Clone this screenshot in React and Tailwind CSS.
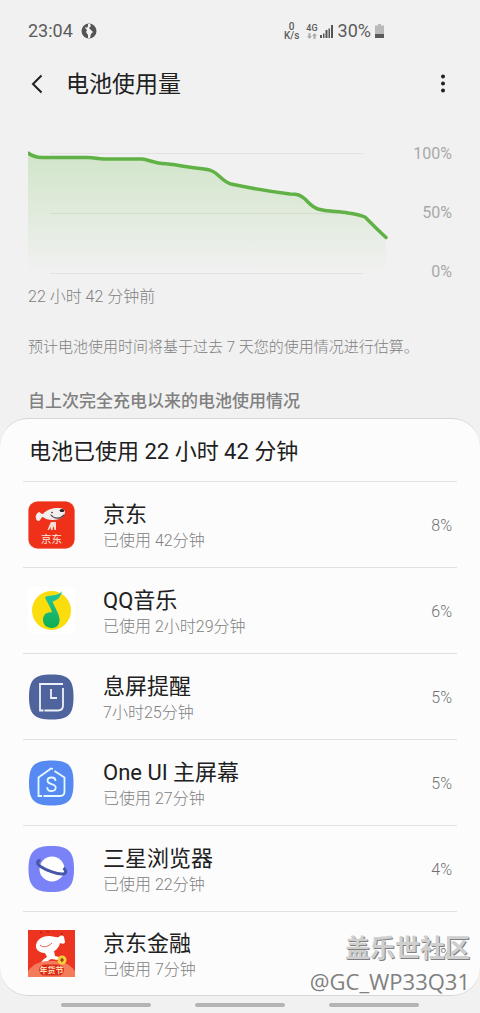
import { useId } from 'react'

function JdIcon() {
  return (
    <svg viewBox="0 0 48 48" className="size-12 shrink-0" aria-hidden="true">
      <rect width="47" height="48" rx="9.500" fill="#f6cfc4" />
      <rect x="0.5" y="0.5" width="46" height="47" rx="9" fill="#ee3118" />
      <path d="M8 17c-1-2 1-5 3-6 1 0 2 2 4 2 3-4 9-6 15-6 4 0 7 1 7 4 0 5-6 8-12 8-5 0-8-1-10-3-2 0-2 3-4 4-2 0-3-1-3-3z" fill="#f4efef" />
      <path d="M23 14c3 4 9 4.500 13 0" fill="none" stroke="#56494a" strokeWidth="1.200" strokeLinecap="round" />
      <ellipse cx="34" cy="9.500" rx="2.500" ry="1.500" fill="#2c2223" />
      <circle cx="24" cy="11.500" r="0.8" fill="#2c2223" />
      <path d="M23 21h5v8h-1.500l-1-4-1 4H23l-.5-3-1.500 3h-1.500l2-5z" fill="#f9dcd5" />
      <text x="23.500" y="41.500" textAnchor="middle" fontSize="10.500" fill="#ffe9e2">京东</text>
    </svg>
  )
}

function MusicIcon() {
  const id = useId()
  return (
    <svg viewBox="0 0 48 48" className="size-12 shrink-0" aria-hidden="true">
      <defs>
        <linearGradient id={id} x1="0" y1="0" x2="0" y2="1">
          <stop offset="0" stopColor="#22c6a5" />
          <stop offset="1" stopColor="#0fae4f" />
        </linearGradient>
      </defs>
      <rect width="47" height="47" rx="6" fill="#fff" />
      <circle cx="23.500" cy="23.500" r="19.500" fill="#fbdc0c" />
      <path
        d="M34 4c-2 3-6 4-10 4.500-3 .3-6 .5-7 1.500 1 4 5 8 7 15.500-6-1-9 3-9 7.500 0 5 4 8 9 8 5 0 8-4 7.500-9C31 26 26 19 24.500 14.500 29 13.500 33 10 34 4z"
        fill={`url(#${id})`}
      />
    </svg>
  )
}

function AodIcon() {
  return (
    <svg viewBox="0 0 48 48" className="size-12 shrink-0" aria-hidden="true">
      <path d="M23.500 1.500c17 0 22 5 22 22.500s-5 22.500-22 22.500S1 41.500 1 24 6.500 1.500 23.500 1.500z" fill="#4f639d" />
      <path d="M35 11H12v26.500h3.500M16.500 37.500H30c3.500 0 5-1.500 5-5V15M23 16v9h6" fill="none" stroke="#eef1f8" strokeWidth="1.800" />
    </svg>
  )
}

function HomeIcon() {
  return (
    <svg viewBox="0 0 48 48" className="size-12 shrink-0" aria-hidden="true">
      <path d="M23.500 1.500c17 0 22 5 22 22.500s-5 22.500-22 22.500S1 41.500 1 24 6.500 1.500 23.500 1.500z" fill="#568af2" />
      <path d="M25 10l-2-.5L10.500 18.500V37H14M15.500 37H32c3 0 4.500-1.500 4.500-4.500V18.500L26.500 12" fill="none" stroke="#e6fbff" strokeWidth="1.800" />
      <path
        d="M27.500 22c0-2.500-1.500-3.500-4-3.500s-4 1.300-4 3.300c0 4.500 8.200 2 8.200 6.700 0 2.300-1.700 3.500-4.200 3.500s-4.300-1.200-4.300-3.800"
        fill="none"
        stroke="#e6fbff"
        strokeWidth="1.800"
      />
    </svg>
  )
}

function BrowserIcon() {
  return (
    <svg viewBox="0 0 48 48" className="size-12 shrink-0" aria-hidden="true">
      <path d="M23.500 1c17 0 22.500 5.500 22.500 23S40.500 47 23.500 47 .5 41.500.5 24 6.500 1 23.500 1z" fill="#7a82f8" />
      <circle cx="24" cy="24" r="12.500" fill="#fff" />
      <path d="M12.500 15.500c-4 0-4 3.500 0 6 6 4 17 8 22.500 7.500 4-.5 3-4 .5-6" fill="none" stroke="#4858a8" strokeWidth="3" />
    </svg>
  )
}

function JdFinanceIcon() {
  return (
    <svg viewBox="0 0 48 48" className="size-12 shrink-0" aria-hidden="true">
      <rect width="47" height="47" fill="#ed3420" />
      <path d="M0 47V41c6-8 14-10 23.500-10S41 33 47 41v6z" fill="#f47c5b" />
      <path d="M12 2l2 1M19 1.500l2 1M34 3l-1 2" stroke="#8f2018" strokeWidth="1" />
      <path d="M8 15C9 9 15 6 21 6c5 0 7 2 10 1 1-2 4-2 5 0l1 5c0 2-3 2-5 1-1 5-5 9-11 10-7 1-14-2-13-8z" fill="#fff" />
      <path d="M12 15c3 3 8 2 12-2" fill="none" stroke="#e46352" strokeWidth="1" />
      <path d="M17 23l9-2 1 5 4 1-1 3-7-1-3 2-7 1 3-3 3-2z" fill="#fff" />
      <circle cx="34" cy="30" r="4.500" fill="#f9cf3c" />
      <path d="M34 27.500l2 2.500-2 2.500-2-2.500z" fill="#955016" />
      <rect x="11" y="34.500" width="25" height="11" rx="5.500" fill="#d92a1b" />
      <text x="23.500" y="43" textAnchor="middle" fontSize="8" fontWeight="bold" fill="#ffd9b0">年货节</text>
    </svg>
  )
}

const apps = [
  { name: '京东', used: '已使用 42分钟', percent: '8%', Icon: JdIcon },
  { name: 'QQ音乐', used: '已使用 2小时29分钟', percent: '6%', Icon: MusicIcon },
  { name: '息屏提醒', used: '7小时25分钟', percent: '5%', Icon: AodIcon },
  { name: 'One UI 主屏幕', used: '已使用 27分钟', percent: '5%', Icon: HomeIcon },
  { name: '三星浏览器', used: '已使用 22分钟', percent: '4%', Icon: BrowserIcon },
  { name: '京东金融', used: '已使用 7分钟', percent: '3%', Icon: JdFinanceIcon },
]

const line =
  'M0 9C4 12 8 13.500 14 13.500H60C67 13.500 69 15 76 15H114C122 16 126 19 134 19.500C146 20 152 22 164 23.500C172 25 178 24.500 184 27C191 30 195 38 203 40C222 44 246 48 262 50C270 50 272 51 277 55C282 60 284 63 290 65C300 68 310 67 320 69C327 70 332 71 337 73L348 84L358 93.500'

function StatusBar() {
  return (
    <div className="flex h-[62px] items-center justify-between pl-7 pr-24 text-[#5c5c5c]">
      <div className="flex items-center gap-2">
        <span className="text-lg">23:04</span>
        <svg viewBox="0 0 16 16" className="size-4" aria-hidden="true">
          <circle cx="8" cy="8" r="7.500" fill="#555" />
          <path d="M7 1l2 0 1 2-2 2 2 2 2 2-2 2-1 4-2 0 0-3-2-3 1-2-2-2 1-1 1 1 1-2z" fill="#f1f1f1" />
        </svg>
      </div>
      <div className="flex items-center">
        <div className="flex flex-col items-center text-[10px] font-medium leading-[9px]">
          <span>0</span>
          <span>K/s</span>
        </div>
        <div className="ml-[7px] flex flex-col items-center gap-px text-[9px] font-medium leading-[8px]">
          <span>4G</span>
          <svg viewBox="0 0 10 6" className="h-1.5 w-2.5" aria-hidden="true">
            <path d="M2.500 6L0 3h1.500V0h2v3H5zM7.500 0L10 3H8.500v3h-2V3H5z" fill="#aaa" />
          </svg>
        </div>
        <svg viewBox="0 0 13 13" className="ml-0.5 size-[13px]" aria-hidden="true">
          <path d="M0 10h2v3H0zM3 8.500h1.500V13H3zM5.500 5h2v8h-2zM8.500 3.500H10V13H8.500zM11 0h2v13h-2z" fill="#555" />
        </svg>
        <span className="ml-[5px] text-lg">30%</span>
        <svg viewBox="0 0 9 14" className="ml-1 h-3.5 w-[9px]" aria-hidden="true">
          <path d="M3 0h3v1.500h3V14H0V1.500h3z" fill="#bababa" />
          <path d="M0 10h9v4H0z" fill="#5a5a5a" />
        </svg>
      </div>
    </div>
  )
}

function Chart() {
  const id = useId()
  return (
    <div className="flex h-[136px] justify-between px-7">
      <svg viewBox="0 0 360 136" preserveAspectRatio="none" className="h-full min-w-0 flex-1" role="img" aria-label="电池使用量">
        <defs>
          <linearGradient id={id} gradientUnits="userSpaceOnUse" x1="0" y1="9" x2="0" y2="130">
            <stop offset="0" stopColor="#70c050" stopOpacity="0.250" />
            <stop offset="1" stopColor="#70c050" stopOpacity="0" />
          </linearGradient>
        </defs>
        <path d="M22 9.500H335M22 69.500H335M22 129.500H335" stroke="#e2e2e2" />
        <path d={`${line}V130H0Z`} fill={`url(#${id})`} />
        <path d={line} fill="none" stroke="#61b246" strokeWidth="3.500" strokeLinecap="round" vectorEffect="non-scaling-stroke" />
      </svg>
      <div className="flex w-16 flex-col justify-between pt-0.5 text-right text-base leading-4 text-[#a8a8a8]">
        <span>100%</span>
        <span>50%</span>
        <span>0%</span>
      </div>
    </div>
  )
}

export default function App() {
  return (
    <div className="relative min-h-screen bg-[#f1f1f1] font-['Roboto','Noto_Sans_CJK_SC',sans-serif]">
      <StatusBar />
      <header className="flex h-11 items-center justify-between px-[27px] text-[#202020]">
        <div className="flex items-center gap-5">
          <button type="button" aria-label="返回" className="flex w-[19px] justify-center">
            <svg viewBox="0 0 12 20" className="h-5 w-3" aria-hidden="true">
              <path d="M10.500 1.500L2 10l8.500 8.500" fill="none" stroke="currentColor" strokeWidth="2" />
            </svg>
          </button>
          <h1 className="pt-0.5 text-[23px] leading-8">电池使用量</h1>
        </div>
        <button type="button" aria-label="更多选项" className="flex w-5 justify-center">
          <svg viewBox="0 0 4 20" className="h-5 w-1" aria-hidden="true">
            <g fill="currentColor">
              <circle cx="2" cy="2.500" r="2" />
              <circle cx="2" cy="9.500" r="2" />
              <circle cx="2" cy="16.500" r="2" />
            </g>
          </svg>
        </button>
      </header>

      <section className="pt-[38px]">
        <Chart />
        <p className="mt-[5px] px-7 text-base font-light leading-6 text-[#808080]">22 小时 42 分钟前</p>
        <p className="mt-[26px] px-7 text-[15px] font-light leading-6 text-[#808080]">预计电池使用时间将基于过去 7 天您的使用情况进行估算。</p>
      </section>

      <h2 className="px-7 pb-[5px] pt-[30px] text-[17px] font-medium leading-6 text-[#808080]">自上次完全充电以来的电池使用情况</h2>

      <main className="rounded-[28px] border-y border-[#d6d6d6] bg-[#fcfcfc] px-[23px]">
        <h3 className="flex h-[62px] items-center px-[6px] pt-[3px] text-[22px] text-[#202020]">电池已使用 22 小时 42 分钟</h3>
        <ul>
          {apps.map(({ name, used, percent, Icon }) => (
            <li key={name} className="flex h-[86px] items-center gap-[27px] border-t border-[#e0e0e0] px-[5px] last:h-[84px]">
              <Icon />
              <div className="min-w-0 flex-1 pt-1">
                <div className="text-[22px] leading-7 text-[#202020]">{name}</div>
                <div className="text-base font-light leading-6 text-[#808080]">{used}</div>
              </div>
              <span className="pt-0.5 text-base font-light text-[#707070]">{percent}</span>
            </li>
          ))}
        </ul>
      </main>

      <div className="flex justify-center gap-11 pt-[7px]">
        <span className="h-1 w-[90px] rounded-full bg-[#b4b4b4]" />
        <span className="h-1 w-[90px] rounded-full bg-[#b4b4b4]" />
        <span className="h-1 w-[90px] rounded-full bg-[#b4b4b4]" />
      </div>

      <div className="absolute bottom-[18px] right-2.5 text-right">
        <div className="text-[25px] font-bold leading-9 text-[#cfcfcf] [text-shadow:1px_1px_0_#808080]">盖乐世社区</div>
        <div className="font-['Open_Sans',sans-serif] text-[22px] leading-7 text-[#808080]">@GC_WP33Q31</div>
      </div>
    </div>
  )
}
